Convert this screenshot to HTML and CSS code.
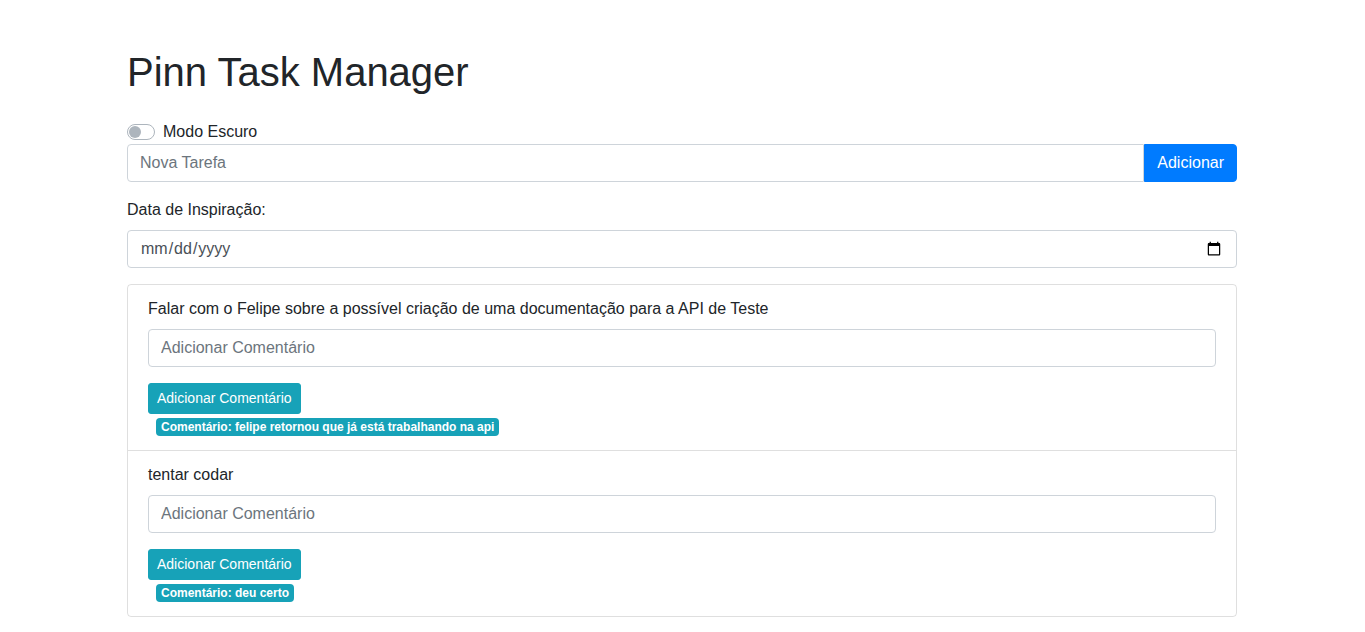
FILE: index.html
```html
<!DOCTYPE html>
<html lang="pt-BR">
<head>
<meta charset="utf-8">
<title>Pinn Task Manager</title>
<link rel="stylesheet" href="styles.css">
</head>
<body>
<div class="container">
  <h1 class="title">Pinn Task Manager</h1>
  <div class="switch">
    <span class="switch-track"><span class="switch-knob"></span></span>
    <label class="switch-label">Modo Escuro</label>
  </div>
  <div class="input-group">
    <input class="form-control grouped" type="text" placeholder="Nova Tarefa">
    <button class="btn btn-primary">Adicionar</button>
  </div>
  <label class="field-label">Data de Inspiração:</label>
  <input class="form-control date" type="date">
  <ul class="list-group">
    <li class="list-item">
      <p class="task">Falar com o Felipe sobre a possível criação de uma documentação para a API de Teste</p>
      <input class="form-control comment-input" type="text" placeholder="Adicionar Comentário">
      <button class="btn btn-info btn-sm">Adicionar Comentário</button>
      <div class="comments"><span class="badge">Comentário: felipe retornou que já está trabalhando na api</span></div>
    </li>
    <li class="list-item">
      <p class="task">tentar codar</p>
      <input class="form-control comment-input" type="text" placeholder="Adicionar Comentário">
      <button class="btn btn-info btn-sm">Adicionar Comentário</button>
      <div class="comments"><span class="badge">Comentário: deu certo</span></div>
    </li>
  </ul>
</div>
</body>
</html>
```

FILE: styles.css
```css
* { box-sizing: border-box; }
html, body { margin: 0; padding: 0; }
body {
  font-family: "Liberation Sans", Arial, sans-serif;
  font-size: 16px;
  line-height: 1.5;
  color: #212529;
  background: #fff;
}
.container {
  width: 1141px;
  margin: 48px auto 0;
  padding: 0 16px 0 15px;
}
.title {
  font-size: 40px;
  font-weight: 500;
  line-height: 1.2;
  margin: 0 0 24px;
}
.switch {
  display: flex;
  align-items: center;
  height: 24px;
}
.switch-track {
  width: 28px;
  height: 16px;
  border: 1px solid #adb5bd;
  border-radius: 8px;
  background: #fff;
  position: relative;
  margin-right: 8px;
  flex: none;
}
.switch-knob {
  position: absolute;
  top: 1px;
  left: 1px;
  width: 12px;
  height: 12px;
  border-radius: 50%;
  background: #adb5bd;
}
.switch-label { line-height: 24px; }
.form-control {
  display: block;
  width: 100%;
  height: 38px;
  padding: 6px 12px;
  font-family: inherit;
  font-size: 16px;
  line-height: 1.5;
  color: #495057;
  background: #fff;
  border: 1px solid #ced4da;
  border-radius: 4px;
  outline: none;
}
.form-control::placeholder { color: #6c757d; opacity: 1; }
.input-group {
  display: flex;
  margin-bottom: 16px;
}
.grouped {
  flex: 1;
  border-radius: 4px 0 0 4px;
}
.btn {
  font-family: inherit;
  font-size: 16px;
  line-height: 1.5;
  padding: 6px 12px;
  border: 1px solid transparent;
  border-radius: 4px;
  color: #fff;
  cursor: pointer;
}
.btn-primary {
  background: #007bff;
  border-color: #007bff;
  border-radius: 0 4px 4px 0;
  flex: none;
}
.btn-info {
  background: #17a2b8;
  border-color: #17a2b8;
}
.btn-sm {
  font-size: 14px;
  padding: 4px 8px;
  border-radius: 3px;
  display: block;
}
.field-label {
  display: block;
  margin-bottom: 8px;
}
.date {
  margin-bottom: 16px;
}
.list-group {
  list-style: none;
  margin: 0;
  padding: 0;
  border: 1px solid rgba(0,0,0,.125);
  border-radius: 4px;
}
.list-item {
  padding: 12px 20px;
}
.list-item + .list-item {
  border-top: 1px solid rgba(0,0,0,.125);
}
.task {
  margin: 0 0 8px;
}
.comment-input {
  margin-bottom: 16px;
}
.comments {
  padding-left: 8px;
  line-height: 24px;
  height: 24px;
}
.badge {
  display: inline-block;
  padding: 3px 5px;
  font-size: 12px;
  font-weight: 700;
  line-height: 1;
  color: #fff;
  background: #17a2b8;
  border-radius: 4px;
  vertical-align: baseline;
}
```
